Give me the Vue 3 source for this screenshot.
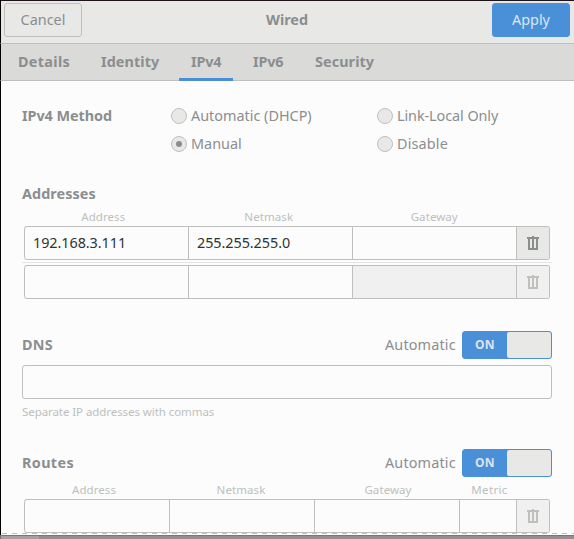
<script setup>
import { ref, h } from 'vue'

const tabs = [
  { name: 'Details', key: 'details' },
  { name: 'Identity', key: 'identity' },
  { name: 'IPv4', key: 'ipv4' },
  { name: 'IPv6', key: 'ipv6' },
  { name: 'Security', key: 'security' },
]
const activeTab = ref('ipv4')

const methods = [
  { label: 'Automatic (DHCP)', key: 'dhcp' },
  { label: 'Link-Local Only', key: 'link' },
  { label: 'Manual', key: 'manual' },
  { label: 'Disable', key: 'disable' },
]
const method = ref('manual')

const TrashIcon = () =>
  h('svg', { width: 12, height: 14, viewBox: '0 0 12 14', fill: 'currentColor', 'shape-rendering': 'crispEdges' }, [
    h('path', { d: 'M5 0h2v1h5v2h-1v11H1V3H0V1h5zM3 3v9h2V3zM7 3v9h2V3z', 'fill-rule': 'evenodd' }),
  ])
</script>

<template>
  <div class="window">
    <header class="titlebar">
      <button class="btn cancel">Cancel</button>
      <h1 class="title">Wired</h1>
      <button class="btn apply">Apply</button>
    </header>

    <nav class="tabs">
      <a
        v-for="t in tabs"
        :key="t.key"
        class="tab"
        :class="[t.key, { active: t.key === activeTab }]"
        @click="activeTab = t.key"
      >{{ t.name }}</a>
    </nav>

    <main class="content">
      <section class="method">
        <h2 class="heading h-method">IPv4 Method</h2>
        <div class="options">
          <label v-for="m in methods" :key="m.key" class="option" :class="m.key" @click="method = m.key">
            <span class="radio"><span v-if="m.key === method" class="dot"></span></span>{{ m.label }}
          </label>
        </div>
      </section>

      <section class="addresses">
        <h2 class="heading">Addresses</h2>
        <div class="labels address-labels">
          <span>Address</span><span>Netmask</span><span>Gateway</span>
        </div>
        <div class="row address-row">
          <div class="cell">192.168.3.111</div>
          <div class="cell">255.255.255.0</div>
          <div class="cell"></div>
          <button class="trash"><TrashIcon /></button>
        </div>
        <div class="separator"></div>
        <div class="row address-row">
          <div class="cell"></div>
          <div class="cell"></div>
          <div class="cell insensitive"></div>
          <button class="trash disabled"><TrashIcon /></button>
        </div>
      </section>

      <section class="dns">
        <div class="section-head">
          <h2 class="heading h-dns">DNS</h2>
          <span class="auto">Automatic</span>
          <span class="switch"><span class="on">ON</span><span class="knob"></span></span>
        </div>
        <div class="entry"></div>
        <p class="hint">Separate IP addresses with commas</p>
      </section>

      <section class="routes">
        <div class="section-head">
          <h2 class="heading h-routes">Routes</h2>
          <span class="auto">Automatic</span>
          <span class="switch"><span class="on">ON</span><span class="knob"></span></span>
        </div>
        <div class="labels route-labels">
          <span>Address</span><span>Netmask</span><span>Gateway</span><span class="metric">Metric</span>
        </div>
        <div class="row route-row">
          <div class="cell"></div>
          <div class="cell"></div>
          <div class="cell"></div>
          <div class="cell"></div>
          <button class="trash disabled"><TrashIcon /></button>
        </div>
      </section>
      <div class="overflow-edge"></div>
    </main>
    <footer class="bottom-bar"><span class="bar-segment"></span></footer>
  </div>
</template>

<style>
body {
  background: #fcfcfc;
  overflow: hidden;
}
</style>

<style scoped>
* {
  box-sizing: border-box;
}
.window {
  width: 574px;
  height: 539px;
  display: flex;
  flex-direction: column;
  overflow: hidden;
  font: 14.4px/20px 'Noto Sans', sans-serif;
  color: #8b8e8f;
  cursor: default;
}
.titlebar {
  height: 44px;
  flex: none;
  display: grid;
  grid-template-columns: 78px 1fr 78px;
  align-items: start;
  padding: 2px 4px 0 3px;
  background: #e8e8e7;
  border-top: 1px solid #1d141b;
  border-left: 1px solid #000;
  border-bottom: 1px solid #bfbfbb;
}
.btn {
  height: 34px;
  padding: 0;
  border: 1px solid #bfbfbb;
  border-radius: 3px;
  background: #e8e8e7;
  color: inherit;
  font: inherit;
}
.apply {
  background: #4a90d9;
  border-color: #4a90d9;
  color: #dce6ef;
}
.title {
  margin: 0;
  padding: 7px 0 0;
  font-size: 14.4px;
  line-height: 20px;
  font-weight: 700;
  text-align: center;
}
.tabs {
  height: 37px;
  flex: none;
  display: flex;
  gap: 8px;
  padding-left: 5px;
  background: #dadad8;
  border-left: 1px solid #000;
  border-bottom: 1px solid #bfbfbb;
}
.tab {
  height: 37px;
  padding: 8px 0 0 12px;
  font-weight: 700;
  white-space: nowrap;
}
.tab.active {
  border-bottom: 3px solid #4a90d9;
}
.details {
  width: 75px;
  letter-spacing: 0.32px;
}
.identity {
  width: 82px;
  letter-spacing: 0.08px;
}
.ipv4,
.ipv6 {
  width: 54px;
  letter-spacing: -0.15px;
}
.security {
  width: 84px;
  letter-spacing: 0.08px;
}
.content {
  flex: 1;
  min-height: 0;
  padding: 25px 22px 0 21px;
  background: #fcfcfc;
  border-left: 1px solid #000;
}
.heading {
  margin: 0;
  font-size: 14.4px;
  line-height: 20px;
  font-weight: 700;
  letter-spacing: 0.06px;
}
.h-method {
  letter-spacing: -0.05px;
}
.h-dns {
  letter-spacing: 0.2px;
}
.h-routes {
  letter-spacing: 0.35px;
}
.method {
  display: grid;
  grid-template-columns: 149px 1fr;
}
.options {
  display: grid;
  grid-template-columns: 206px 1fr;
  row-gap: 8px;
}
.option {
  display: flex;
  align-items: center;
  gap: 4px;
  height: 20px;
}
.link {
  letter-spacing: -0.07px;
}
.disable {
  letter-spacing: 0.15px;
}
.radio {
  width: 16px;
  height: 16px;
  display: flex;
  align-items: center;
  justify-content: center;
  background: #e8e8e7;
  border: 1px solid #bfbfbb;
  border-radius: 50%;
}
.dot {
  width: 6px;
  height: 6px;
  border-radius: 50%;
  background: #8b8e8f;
}
.addresses {
  margin-top: 30px;
}
.labels {
  display: grid;
  height: 16px;
  margin-left: -1.5px;
  font-size: 11.5px;
  line-height: 16px;
  letter-spacing: 0.08px;
  text-align: center;
  color: #bcc0bc;
}
.address-labels {
  grid-template-columns: repeat(3, 165.5px);
  margin-top: 5px;
}
.route-labels {
  grid-template-columns: repeat(3, 147px) 56px;
  margin-top: 5px;
}
.metric {
  letter-spacing: 0.35px;
}
.row {
  display: grid;
  height: 34px;
  margin: 1px 2px 0;
  border: solid #bfbfbd;
  border-width: 1px 1px 1px 0;
  border-radius: 3px;
}
.address-row {
  grid-template-columns: repeat(3, 164px) 33px;
}
.route-row {
  grid-template-columns: repeat(3, 145px) 57px 33px;
}
.cell {
  padding: 6px 8px;
  border-left: 1px solid #bfbfbd;
  color: #2e3436;
  letter-spacing: -0.06px;
}
.cell:first-child {
  border-radius: 3px 0 0 3px;
}
.insensitive {
  background: #f0f0f0;
}
.trash {
  display: flex;
  align-items: center;
  justify-content: center;
  padding: 0;
  border: 0;
  border-left: 1px solid #bfbfbd;
  border-radius: 0 2px 2px 0;
  background: #e8e8e7;
  color: #8b8e8f;
}
.trash.disabled {
  background: #f0f0f0;
  color: #bfbfbb;
}
.separator {
  height: 1px;
  margin: 2px 0;
  background: #e4e4e2;
}
.separator + .row {
  margin-top: 2px;
}
.dns {
  margin-top: 32px;
}
.section-head {
  display: flex;
  align-items: center;
  height: 28px;
}
.auto {
  margin-left: auto;
  width: 77px;
  letter-spacing: 0.15px;
}
.switch {
  display: grid;
  grid-template-columns: 1fr 1fr;
  width: 90px;
  height: 28px;
  border: 1px solid #4a90d9;
  border-radius: 3px;
  background: #4a90d9;
}
.on {
  padding: 3px 0 0;
  font-size: 12px;
  font-weight: 700;
  text-align: center;
  letter-spacing: 0.4px;
  color: #dce3ea;
}
.knob {
  border-radius: 2px;
  background: #e8e8e7;
}
.entry {
  height: 34px;
  margin-top: 6px;
  border: 1px solid #bfbfbd;
  border-radius: 3px;
}
.hint {
  margin: 5px 0 0;
  font-size: 11.5px;
  line-height: 16px;
  letter-spacing: -0.07px;
  color: #bcc0bc;
}
.routes {
  margin-top: 29px;
}
.overflow-edge {
  height: 1px;
  margin: 0 -22px 0 -20px;
  background: repeating-linear-gradient(90deg, #bfbfbd 0 5px, #fcfcfc 5px 10px);
}
.bottom-bar {
  height: 4px;
  flex: none;
  display: flex;
  background: #909090;
  border-top: 1px solid #777;
  border-left: 1px solid #777;
}
.bar-segment {
  width: 38px;
  background: #a2a2a2;
}
</style>
